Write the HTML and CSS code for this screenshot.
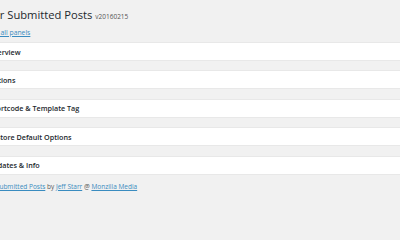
FILE: index.html
```html
<!DOCTYPE html>
<html lang="en">
<head>
    <meta charset="UTF-8">
    <title>User Submitted Posts</title>
    <link rel="stylesheet" href="styles.css">
</head>
<body>
<div class="wrap">
    <h1 class="page-title">User Submitted Posts <small>v20160215</small></h1>
    <div class="toggle-all"><a href="#">Toggle all panels</a></div>
    <div class="panels">
        <div class="panel"><h2>Overview</h2></div>
        <div class="panel"><h2>Options</h2></div>
        <div class="panel"><h2>Shortcode &amp; Template Tag</h2></div>
        <div class="panel"><h2>Restore Default Options</h2></div>
        <div class="panel"><h2>Updates &amp; Info</h2></div>
    </div>
    <div class="credits">
        <a href="#">User Submitted Posts</a> by <a href="#">Jeff Starr</a> @ <a href="#">Monzilla Media</a>
    </div>
</div>
</body>
</html>
```

FILE: styles.css
```css
html, body {
    margin: 0;
    padding: 0;
    background: #f1f1f1;
    overflow: hidden;
}
body {
    font-family: "Open Sans", "Noto Sans", sans-serif;
    color: #23282d;
}
a {
    color: #3a8cc0;
    text-decoration: underline;
}
.wrap {
    margin-left: -20px;
    padding-top: 8px;
}
.page-title {
    margin: 0;
    font-size: 11.2px;
    line-height: 14px;
    font-weight: 400;
    color: #23282d;
}
.page-title small {
    font-size: 6.5px;
    color: #555;
}
.toggle-all {
    margin-top: 4px;
    margin-left: -2px;
    font-size: 6.8px;
    line-height: 10px;
}
.panels {
    margin-top: 4px;
    display: flex;
    flex-direction: column;
    gap: 9.4px;
}
.panel {
    background: #fff;
    border-top: 1px solid #e8e8e8;
    border-bottom: 1px solid #e8e8e8;
    height: 17px;
    display: flex;
    align-items: center;
    padding-left: 8px;
}
.panel h2 {
    margin: 0;
    font-size: 7.2px;
    font-weight: 600;
    color: #23282d;
}
.credits {
    margin-top: 7px;
    font-size: 6.5px;
    line-height: 10px;
    color: #555;
}
```
